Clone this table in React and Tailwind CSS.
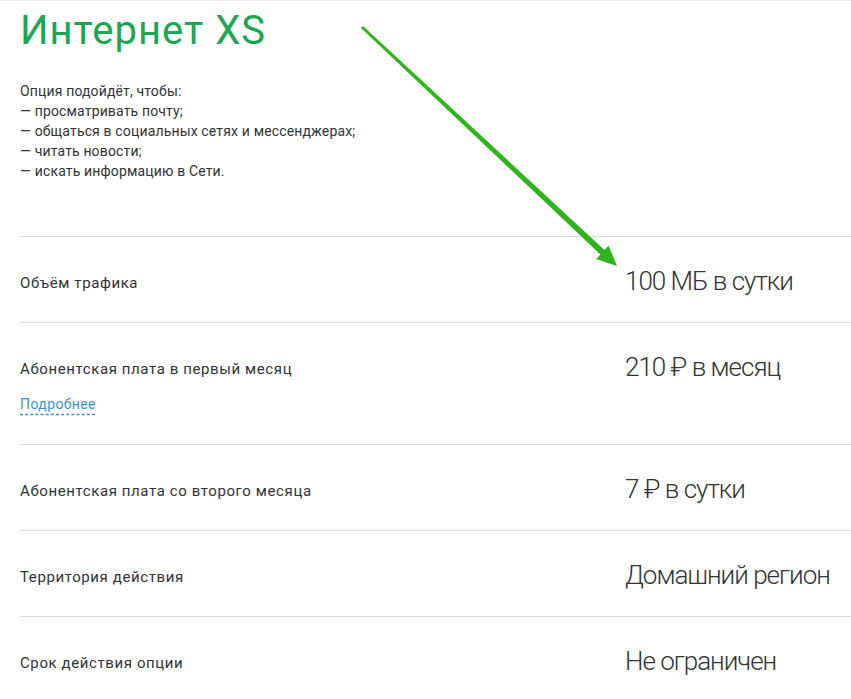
import React from 'react';

const rows = [
  { label: 'Объём трафика', value: '100 МБ в сутки' },
  { label: 'Абонентская плата в первый месяц', value: '210 ₽ в месяц', more: true },
  { label: 'Абонентская плата со второго месяца', value: '7 ₽ в сутки' },
  { label: 'Территория действия', value: 'Домашний регион' },
  { label: 'Срок действия опции', value: 'Не ограничен' },
];

const App = () => {
  return (
    <div className="relative min-h-[699px] bg-white border-t border-[#f0f0f0] pl-5 text-[#333] font-['Roboto',sans-serif] overflow-hidden">
      {/* Header */}
      <h1 className="pt-[6px] text-[40px] leading-[48px] font-normal tracking-[1px] text-[#1ba653]">
        Интернет XS
      </h1>

      <div className="mt-[26px] text-[14px] leading-[20px] tracking-[0.15px] text-[#333]">
        <p>Опция подойдёт, чтобы:</p>
        <p>— просматривать почту;</p>
        <p>— общаться в социальных сетях и мессенджерах;</p>
        <p>— читать новости;</p>
        <p>— искать информацию в Сети.</p>
      </div>

      {/* Params */}
      <div className="mt-[55px]">
        {rows.map((row) => (
          <div key={row.label} className="flex border-t border-[#dcdcdc] pt-[28px] pb-[25px]">
            <div className="w-[605px] shrink-0 mt-[8px]">
              <div className="text-[15px] leading-[20px] tracking-[0.6px] text-[#333]">{row.label}</div>
              {row.more && (
                <a className="block w-fit mt-[15px] mb-[5px] text-[14px] leading-[20px] tracking-[0.4px] text-[#3a95c6] underline decoration-dashed decoration-[#3a95c6] underline-offset-[5px]">
                  Подробнее
                </a>
              )}
            </div>
            <div className="text-[26px] leading-[32px] font-light tracking-[-1px] text-[#333]">{row.value}</div>
          </div>
        ))}
      </div>

      {/* Arrow */}
      <svg className="absolute left-0 top-0 pointer-events-none" width="851" height="699" viewBox="0 0 851 699">
        <polygon
          fill="#2fb41e"
          points="361,27.1 363,24.9 604.5,249.1 608.6,244.7 617,265 596.2,257.9 600.4,253.5"
        />
      </svg>
    </div>
  );
};

export default App;
